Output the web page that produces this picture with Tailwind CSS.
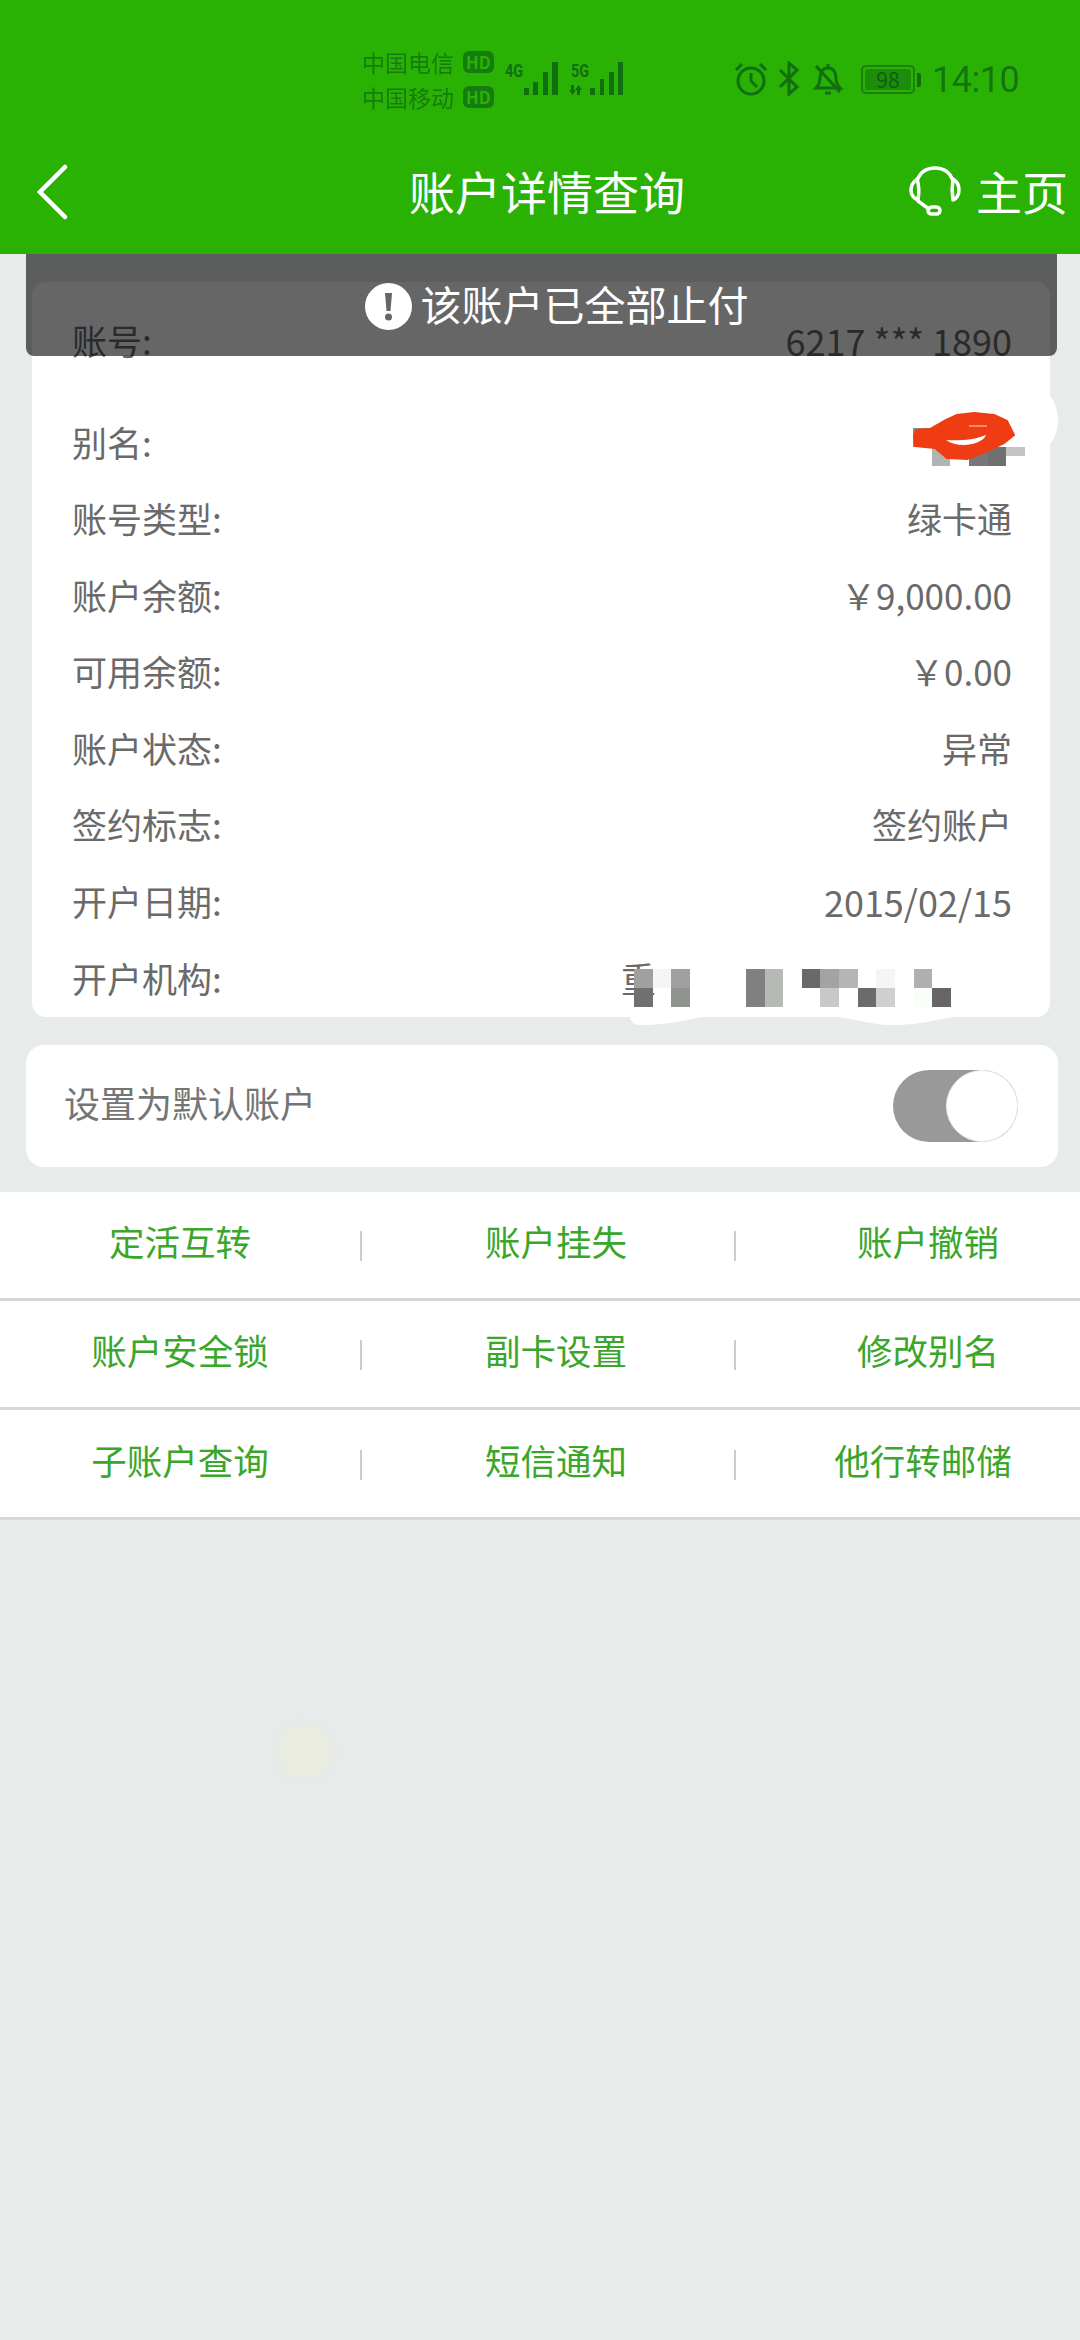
<!DOCTYPE html>
<html lang="zh-CN">
<head>
  <meta charset="UTF-8">
  <meta name="viewport" content="width=device-width, initial-scale=1.0">
  <title>账户详情查询</title>
  <script src="https://cdn.jsdelivr.net/npm/@tailwindcss/browser@4"></script>
</head>

<body class="bg-[#e7ebea] w-[1080px] h-[2340px] overflow-hidden relative font-['Noto_Sans_CJK_SC','Noto_Sans',sans-serif]">

  <!-- header -->
  <header class="bg-[#29b204] h-[254px] flex flex-col">
    <!-- status bar -->
    <div class="h-[150px] pt-[49px] pl-[362px] flex text-[#116f12]">
      <div class="w-[134px] flex flex-col gap-[9px] text-[23px] leading-[26px] opacity-80">
        <div class="flex items-center gap-[7px]">
          <span class="w-[94px] whitespace-nowrap">中国电信</span>
          <span class="w-[31px] h-[22px] rounded-[6px] bg-[#116f12] text-[#29b204] text-[17px] leading-[22px] font-bold text-center">HD</span>
        </div>
        <div class="flex items-center gap-[7px]">
          <span class="w-[94px] whitespace-nowrap">中国移动</span>
          <span class="w-[31px] h-[22px] rounded-[6px] bg-[#116f12] text-[#29b204] text-[17px] leading-[22px] font-bold text-center">HD</span>
        </div>
      </div>
      <!-- signal -->
      <svg class="ml-[9px] mt-[12px] shrink-0" width="120" height="36" viewBox="0 0 120 36" fill="#116f12">
        <text x="0" y="16" font-size="18" font-weight="700" font-family="Roboto" textLength="18" lengthAdjust="spacingAndGlyphs">4G</text>
        <rect x="19" y="27" width="5" height="7"/><rect x="28" y="21" width="5" height="13"/><rect x="38" y="11" width="5" height="23"/><rect x="47" y="1" width="6" height="33"/>
        <text x="66" y="16" font-size="18" font-weight="700" font-family="Roboto" textLength="18" lengthAdjust="spacingAndGlyphs">5G</text>
        <path d="M66 24h3v5h2l-3.500 5-3.500-5h2zM72 34h3v-5h2l-3.500-5-3.500 5h2z"/>
        <rect x="85" y="27" width="5" height="7"/><rect x="95" y="18" width="4" height="16"/><rect x="104" y="11" width="5" height="23"/><rect x="113" y="1" width="5" height="33"/>
      </svg>
      <!-- alarm -->
      <svg class="ml-[108px] mt-[13px] shrink-0" width="36" height="34" viewBox="0 0 36 34" fill="none" stroke="#116f12" stroke-width="3">
        <circle cx="18" cy="19" r="13"/><path d="M18 11v8l6 6M3 8l6-6M33 8l-6-6"/>
      </svg>
      <!-- bluetooth -->
      <svg class="ml-[9px] mt-[12px] shrink-0" width="22" height="35" viewBox="0 0 22 35" fill="none" stroke="#116f12" stroke-width="3">
        <path d="M2 9l17 17-8 7V2l8 7L2 26"/>
      </svg>
      <!-- muted bell -->
      <svg class="ml-[12px] mt-[13px] shrink-0" width="32" height="34" viewBox="0 0 32 34" fill="none" stroke="#116f12" stroke-width="3">
        <path d="M4 26h24c-3-3-4-6-4-10 0-6-3-10-8-10S8 10 8 16c0 4-1 7-4 10zM13 31h6M16 2v4M4 4l24 26"/>
      </svg>
      <!-- battery -->
      <div class="ml-[17px] mt-[16px] flex items-center h-[29px] shrink-0">
        <div class="w-[54px] h-[29px] rounded-[5px] border-2 border-[#1a8010] p-[2px]">
          <div class="h-full bg-[#1d8c0b] rounded-[2px] text-[21px] leading-[21px] text-center text-[#0f5f10]">98</div>
        </div>
        <div class="w-[4px] h-[14px] ml-[2px] rounded-r-[2px] bg-[#116f12]"></div>
      </div>
      <div class="ml-[11px] mt-[8px] text-[36px] leading-[46px] font-['Roboto',sans-serif] tracking-[-0.5px] whitespace-nowrap opacity-90">14:10</div>
    </div>
    <!-- nav -->
    <div class="h-[104px] flex items-start pt-[14px] text-white">
      <svg class="ml-[35px] shrink-0" width="34" height="56" viewBox="0 0 34 56" fill="none" stroke="#fff" stroke-width="4.5" stroke-linecap="round">
        <path d="M30 3L5 28l25 25"/>
      </svg>
      <div class="ml-[340px] -mt-[2px] text-[46px] leading-[56px] whitespace-nowrap">账户详情查询</div>
      <svg class="ml-[224px] mt-[2px] shrink-0" width="52" height="50" viewBox="0 0 52 50" fill="none" stroke="#fff" stroke-width="3.500" stroke-linejoin="round" stroke-linecap="round">
        <path d="M8 15C11 6 18 2 26 2s15 4 18 13"/>
        <path d="M8 13C3 17 2 20 2 24s2 8 7 10c1-6 1-15-1-21z"/>
        <path d="M44 13c5 3 6 7 6 11s-2 9-6 10c-1-6-1-15 0-21z"/>
        <path d="M9 35l11 8"/><rect x="19" y="41" width="12" height="7" rx="3.500"/>
      </svg>
      <div class="ml-[15px] -mt-[2px] text-[46px] leading-[56px] whitespace-nowrap">主页</div>
    </div>
  </header>

  <!-- account detail card -->
  <section class="relative mt-[28px] ml-[32px] w-[1018px] h-[735px] bg-white rounded-[14px] pt-[20px] pl-[40px] pr-[38px] text-[35px] text-[#6a6a6a]">
    <div class="h-[76px] flex justify-between items-center"><span>账号:</span><span class="text-[36px]">6217 *** 1890</span></div>
    <div class="h-[76px] mt-[26px] flex justify-between items-center"><span>别名:</span></div>
    <div class="h-[76.6px] flex justify-between items-center"><span>账号类型:</span><span>绿卡通</span></div>
    <div class="h-[76.6px] flex justify-between items-center"><span>账户余额:</span><span>￥9,000.00</span></div>
    <div class="h-[76.6px] flex justify-between items-center"><span>可用余额:</span><span>￥0.00</span></div>
    <div class="h-[76.6px] flex justify-between items-center"><span>账户状态:</span><span>异常</span></div>
    <div class="h-[76.6px] flex justify-between items-center"><span>签约标志:</span><span>签约账户</span></div>
    <div class="h-[76.6px] flex justify-between items-center"><span>开户日期:</span><span class="text-[36px]">2015/02/15</span></div>
    <div class="h-[76.6px] flex justify-between items-center"><span>开户机构:</span><span class="w-[391px]">重</span></div>

    <!-- retouched patches -->
    <svg class="absolute left-[598px] top-[734px]" width="332" height="10" viewBox="0 0 332 10" fill="#fff">
      <path d="M0 0H332C310 2 295 9 262 9 242 9 222 2 200 0H80C60 2 45 9 10 9 4 9 0 6 0 0z"/>
    </svg>
    <svg class="absolute left-[1018px] top-[114px]" width="8" height="48" viewBox="0 0 8 48" fill="#fff">
      <path d="M0 0C5 6 8 15 8 24s-3 18-8 24z"/>
    </svg>

    <!-- alias mosaic + red scribble -->
    <div class="absolute left-[881px] top-[146px] w-[112px] h-[38px] grid grid-cols-6 grid-rows-2">
      <div class="bg-[#8d8d8d]"></div><div></div><div></div><div></div><div></div><div></div>
      <div></div><div class="bg-[#b3b3b3]"></div><div></div><div class="bg-[#777]"></div><div class="bg-[#6f7070]"></div><div class="bg-[#c4c4c4] h-[9px]"></div>
    </div>
    <svg class="absolute left-[881px] top-[130px]" width="104" height="50" viewBox="0 0 104 50">
      <path d="M1 24L3 18 17 17 31 9 44 3 61 1 81 3 94 9 101 23 91 31 74 39 54 47 34 46 22 36 2 34z" fill="#f03c13" stroke="#f03c13" stroke-width="2" stroke-linejoin="round"/>
      <path d="M33 28c12 1 28 0 40-5-4 10-28 14-40 5z" fill="#fff"/>
      <path d="M56 14h18" stroke="#f88a70" stroke-width="2"/>
    </svg>

    <!-- org mosaic -->
    <div class="absolute left-[602px] top-[687px] w-[317px] h-[38px] grid grid-cols-[repeat(17,1fr)] grid-rows-2">
      <div class="bg-[#a0a0a0]"></div><div class="bg-[#f5f5f5]"></div><div class="bg-[#a0a0a0]"></div><div></div><div></div><div></div><div class="bg-[#808080]"></div><div class="bg-[#b5bab5]"></div><div></div><div class="bg-[#696969]"></div><div class="bg-[#a3a3a3]"></div><div class="bg-[#b5b5b5]"></div><div></div><div class="bg-[#f5f5f5]"></div><div></div><div class="bg-[#b0b0b0]"></div><div></div>
      <div class="bg-[#707070]"></div><div></div><div class="bg-[#8f948f]"></div><div></div><div></div><div></div><div class="bg-[#808080]"></div><div class="bg-[#b5bab5]"></div><div></div><div></div><div class="bg-[#c8c8c8]"></div><div></div><div class="bg-[#6b6b6b]"></div><div class="bg-[#cfcfcf]"></div><div></div><div class="bg-[#f8fff8]"></div><div class="bg-[#666]"></div>
    </div>
  </section>

  <!-- toast -->
  <div class="absolute left-[26px] top-[254px] w-[1031px] h-[102px] bg-black/60 rounded-b-[8px] flex items-start justify-center pl-[30px] pt-[22px] text-white">
    <svg class="mt-[7px] mr-[9px] shrink-0" width="47" height="47" viewBox="0 0 47 47">
      <circle cx="23.500" cy="23.500" r="23.500" fill="#fff"/>
      <path d="M20 10h7l-1.500 18h-4z" fill="#666"/><circle cx="23.500" cy="34" r="3.500" fill="#666"/>
    </svg>
    <span class="text-[41px] leading-[54px] whitespace-nowrap">该账户已全部止付</span>
  </div>

  <!-- default account switch -->
  <section class="mt-[28px] ml-[26px] w-[1032px] h-[122px] bg-white rounded-[18px] pl-[38px] pr-[40px] flex items-center justify-between">
    <span class="text-[36px] text-[#757575] pb-[8px]">设置为默认账户</span>
    <div class="w-[125px] h-[72px] rounded-full bg-[#999] flex justify-end">
      <div class="w-[72px] h-[72px] rounded-full bg-white border border-[#eee]"></div>
    </div>
  </section>

  <!-- actions -->
  <nav class="mt-[25px] bg-white text-[35.5px] text-[#3aa62a]">
    <div class="h-[109px] border-b-[3px] border-[#d5d8d7] flex items-center">
      <span class="w-[360px] text-center whitespace-nowrap pb-[8px]">定活互转</span>
      <span class="w-[2px] h-[30px] mt-[2px] bg-[#ccc]"></span>
      <span class="w-[372px] pl-[16px] text-center whitespace-nowrap pb-[8px]">账户挂失</span>
      <span class="w-[2px] h-[30px] mt-[2px] bg-[#ccc]"></span>
      <span class="w-[344px] pl-[40px] text-center whitespace-nowrap pb-[8px]">账户撤销</span>
    </div>
    <div class="h-[109px] border-b-[3px] border-[#d5d8d7] flex items-center">
      <span class="w-[360px] text-center whitespace-nowrap pb-[8px]">账户安全锁</span>
      <span class="w-[2px] h-[30px] mt-[2px] bg-[#ccc]"></span>
      <span class="w-[372px] pl-[16px] text-center whitespace-nowrap pb-[8px]">副卡设置</span>
      <span class="w-[2px] h-[30px] mt-[2px] bg-[#ccc]"></span>
      <span class="w-[344px] pl-[40px] text-center whitespace-nowrap pb-[8px]">修改别名</span>
    </div>
    <div class="h-[110px] border-b-[3px] border-[#d5d8d7] flex items-center">
      <span class="w-[360px] text-center whitespace-nowrap pb-[8px]">子账户查询</span>
      <span class="w-[2px] h-[30px] mt-[2px] bg-[#ccc]"></span>
      <span class="w-[372px] pl-[16px] text-center whitespace-nowrap pb-[8px]">短信通知</span>
      <span class="w-[2px] h-[30px] mt-[2px] bg-[#ccc]"></span>
      <span class="w-[344px] pl-[30px] text-center whitespace-nowrap pb-[8px]">他行转邮储</span>
    </div>
  </nav>

  <!-- faint spot on the background -->
  <div class="absolute left-[278px] top-[1724px] w-[54px] h-[54px] rounded-full bg-[#e9ecdf] blur-[4px]"></div>

</body>
</html>
